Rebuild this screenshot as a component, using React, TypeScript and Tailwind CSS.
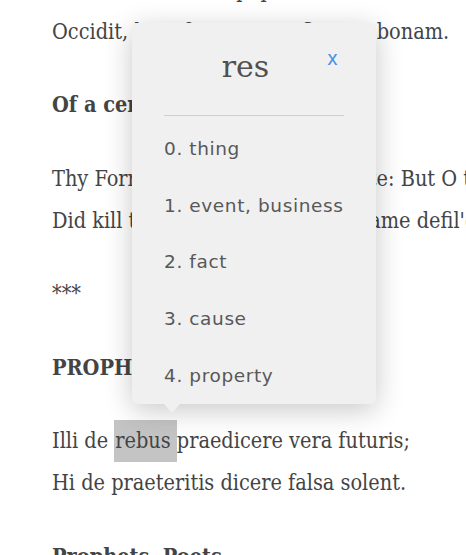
import React from 'react';

const serif = { fontFamily: '"DejaVu Serif", serif' };

function Popup() {
  const senses = ['thing', 'event, business', 'fact', 'cause', 'property'];
  return (
    <div className="absolute left-[132px] top-[23px] w-[244px] rounded-[5px] bg-[#f0f0f0] shadow-[0_6px_28px_rgba(0,0,0,0.22)]">
      <div className="px-8 pt-[18px]">
        <div className="flex items-start">
          <div className="flex-1 text-center text-[30px] leading-[52px] text-[#505050]" style={serif}>
            res
          </div>
          <button className="w-[17px] pt-[7px] text-left font-['Inter',sans-serif] text-[20px] leading-[20px] text-[#4a90e2]">
            x
          </button>
        </div>
        <div className="mt-[22px] h-px bg-[#cfcfcf]" />
        <ul className="pt-[5px] font-['DejaVu_Sans',sans-serif] text-[18.5px] tracking-[0.6px] text-[#585858]">
          {senses.map((s, i) => (
            <li key={i} className="leading-[56.65px]">
              {i}. {s}
            </li>
          ))}
        </ul>
      </div>
      <div className="absolute left-[32px] top-full h-0 w-0 border-x-[8px] border-t-[9px] border-x-transparent border-t-[#f0f0f0]" />
    </div>
  );
}

export default function App() {
  return (
    <div className="relative h-[555px] w-[466px] overflow-hidden bg-white">
      <div className="-mt-[31.5px] whitespace-nowrap pl-[52px] text-[21.5px] leading-[42px] text-[#444] font-stretch-condensed" style={serif}>
        <p className="mb-[31.5px]">
          Nulla fuit nunc illi populo formosior illa
          <br />
          Occidit, heu, forma quae fit esse bonam.
        </p>
        <p className="mb-[31.5px] font-bold">Of a certain fair Lady.</p>
        <p className="mb-[31.5px]">
          Thy Form is fair, thy Minde chaste: But O the Fate
          <br />
          Did kill the Forme, for that the same defil'd.
        </p>
        <p className="mb-[31.5px]">***</p>
        <p className="mb-[31.5px] font-bold">PROPHETAE, POETAE.</p>
        <p className="mb-[31.5px]">
          Illi de <span className="inline-block bg-[#c4c4c4] pl-px pr-[6px] leading-[42px]">rebus</span>praedicere vera futuris;
          <br />
          Hi de praeteritis dicere falsa solent.
        </p>
        <p className="mb-[31.5px] font-bold">Prophets, Poets.</p>
      </div>
      <Popup />
    </div>
  );
}
